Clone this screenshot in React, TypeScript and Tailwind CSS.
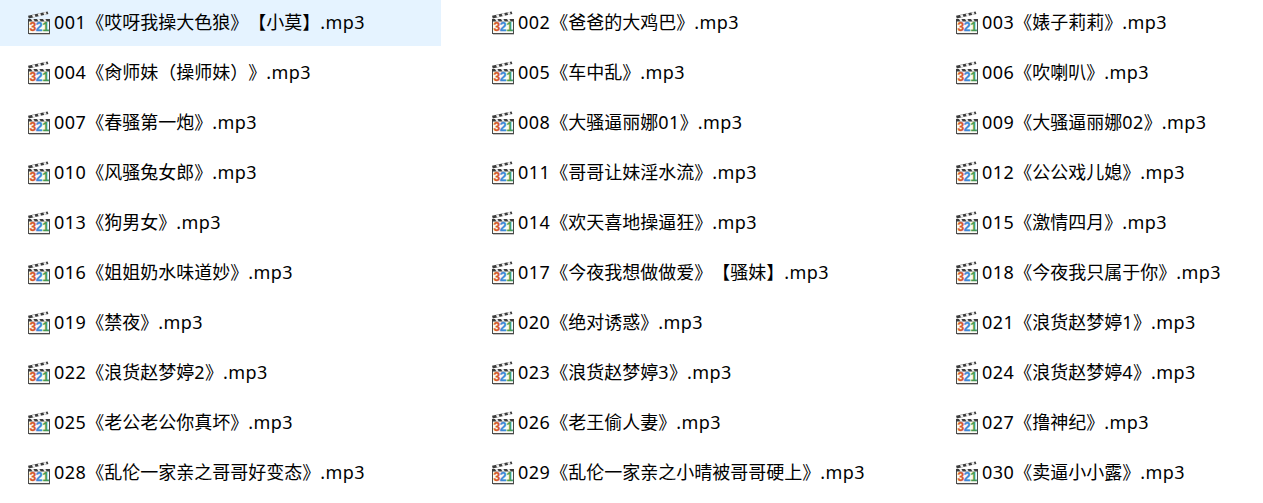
import React from "react";

const files = [
  "001《哎呀我操大色狼》【小莫】.mp3",
  "002《爸爸的大鸡巴》.mp3",
  "003《婊子莉莉》.mp3",
  "004《肏师妹（操师妹）》.mp3",
  "005《车中乱》.mp3",
  "006《吹喇叭》.mp3",
  "007《春骚第一炮》.mp3",
  "008《大骚逼丽娜01》.mp3",
  "009《大骚逼丽娜02》.mp3",
  "010《风骚兔女郎》.mp3",
  "011《哥哥让妹淫水流》.mp3",
  "012《公公戏儿媳》.mp3",
  "013《狗男女》.mp3",
  "014《欢天喜地操逼狂》.mp3",
  "015《激情四月》.mp3",
  "016《姐姐奶水味道妙》.mp3",
  "017《今夜我想做做爱》【骚妹】.mp3",
  "018《今夜我只属于你》.mp3",
  "019《禁夜》.mp3",
  "020《绝对诱惑》.mp3",
  "021《浪货赵梦婷1》.mp3",
  "022《浪货赵梦婷2》.mp3",
  "023《浪货赵梦婷3》.mp3",
  "024《浪货赵梦婷4》.mp3",
  "025《老公老公你真坏》.mp3",
  "026《老王偷人妻》.mp3",
  "027《撸神纪》.mp3",
  "028《乱伦一家亲之哥哥好变态》.mp3",
  "029《乱伦一家亲之小晴被哥哥硬上》.mp3",
  "030《卖逼小小露》.mp3",
];

const ClapIcon = () => (
  <svg width="24" height="24" viewBox="0 0 24 24" className="shrink-0">
    <rect x="2" y="23" width="21" height="1" fill="#c4c4c4" />
    <rect x="1.5" y="9.5" width="21" height="13" fill="#fbfaf6" stroke="#4a4a4a" />
    <rect x="1" y="8" width="22" height="2.5" fill="#3c3c3c" />
    <path d="M1 4.8 L20.6 0.4 L21.4 3 L1.8 7.4 Z" fill="#3c3c3c" />
    <path d="M5 3.9 L7.6 3.3 L8.6 5.9 L6 6.5 Z M10.6 2.7 L13.2 2.1 L14.2 4.7 L11.6 5.3 Z M16.2 1.5 L18.8 0.9 L19.8 3.5 L17.2 4.1 Z" fill="#ededed" />
    <path d="M4 8 h2.4 l1.4 2.5 h-2.4 Z M10 8 h2.4 l1.4 2.5 h-2.4 Z M16 8 h2.4 l1.4 2.5 h-2.4 Z" fill="#ededed" />
    <g fontFamily="'Liberation Sans', sans-serif" fontWeight="700" fontSize="12" strokeWidth="0.3">
      <text x="2.6" y="20.4" fill="#d4582a" stroke="#d4582a">3</text>
      <text x="8.8" y="20.4" fill="#3c88d6" stroke="#3c88d6">2</text>
      <text x="15.4" y="20.4" fill="#459a52" stroke="#459a52">1</text>
    </g>
  </svg>
);

// latin runs sit a little wider in the reference than in Noto Sans
const FileName = ({ name }: { name: string }) => (
  <span className="mb-[2px] leading-none [text-spacing-trim:space-all]">
    {name.split(/([0-9a-z.]+)/).map((part, i) =>
      /^[0-9a-z.]+$/.test(part) ? (
        <span key={i} className="tracking-[0.45px]">
          {part}
        </span>
      ) : (
        part
      )
    )}
  </span>
);

export default function App() {
  return (
    <div className="min-h-[503px] bg-white pb-[7px] font-['Noto_Sans','Noto_Sans_CJK_SC',sans-serif] text-[18px] text-black">
      <div className="grid grid-cols-[441px_441px_335px] gap-x-[23px] gap-y-[4px]">
        {files.map((name, i) => (
          <div
            key={name}
            className={`flex h-[46px] items-center gap-[3px] pl-[27px] whitespace-nowrap ${i === 0 ? "bg-[#e5f3ff]" : ""}`}
          >
            <ClapIcon />
            <FileName name={name} />
          </div>
        ))}
      </div>
    </div>
  );
}
